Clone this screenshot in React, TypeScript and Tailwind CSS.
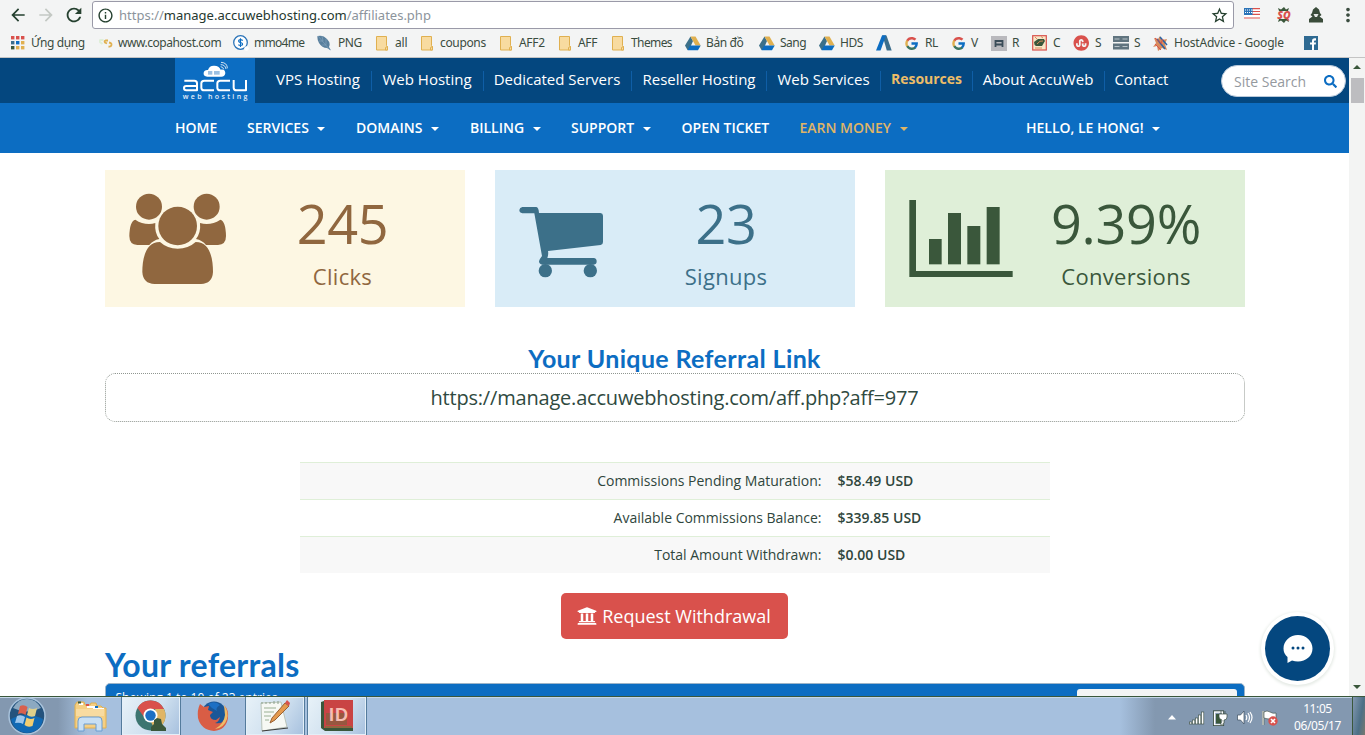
import React from "react";
import { MdArrowBack, MdArrowForward, MdRefresh, MdStarBorder, MdMoreVert, MdInfoOutline } from "react-icons/md";
import { FaSearch, FaUniversity, FaStumbleuponCircle } from "react-icons/fa";

const Apps = () => (
  <svg width="14" height="14" viewBox="0 0 14 14">
    {["#d9514c", "#d9514c", "#d9514c", "#3c6e8c", "#0c6dc2", "#e0b050", "#3a573b", "#e0b050", "#e0b050"].map((c, i) => (
      <rect key={i} x={(i % 3) * 5} y={Math.floor(i / 3) * 5} width="3.4" height="3.4" fill={c} />
    ))}
  </svg>
);

const Copa = () => (
  <svg width="14" height="14" viewBox="0 0 14 14" fill="none">
    <path d="M4.500 4H2Q0 4 1 6L3.500 8" stroke="#dfefd8" strokeWidth="2" />
    <path d="M9 4.500H6.500Q5 5 6 6.500L8 7.500M10 6.500Q12.800 7 12.500 9Q12 11 9.500 10.500" stroke="#e0b050" strokeWidth="1.800" />
  </svg>
);

const Coin = () => (
  <svg width="16" height="16" viewBox="0 0 16 16">
    <circle cx="7.500" cy="7.500" r="6.800" fill="#fff" stroke="#2b74b8" strokeWidth="1.300" />
    <path d="M9.800 5.500Q7.500 4 5.800 5.200Q5 7 7.500 7.500Q10 8 9.500 9.800Q7.500 11.200 5.300 9.800M7.500 3.200V12" fill="none" stroke="#0c6dc2" strokeWidth="1.100" />
    <circle cx="13.500" cy="13.500" r="2.300" fill="#fff" />
  </svg>
);

const Feather = () => (
  <svg width="15" height="16" viewBox="0 0 15 16">
    <path d="M.5 1Q6-.5 10 4Q14 8 12 12L14 15.500L10 13Q5 13 2 8Q0 5 .5 1Z" fill="#587f9d" />
    <path d="M1 1L13 15M5 1L6 6M9 4L9 10M2 6L6 6M5 10L9 10" stroke="#7fa0ba" strokeWidth=".7" />
  </svg>
);

const Folder = () => (
  <svg width="13" height="15" viewBox="0 0 13 15">
    <path d="M.5.5H10.500V9.500L11.500 11V14H.5Z" fill="#f8dba0" stroke="#e0b050" />
    <path d="M11.500 10.500V14H9.500V11.500Z" fill="#f8dba0" stroke="#e0b050" />
  </svg>
);

const Drive = () => (
  <svg width="16" height="15" viewBox="0 0 16 15">
    <path d="M5.500 0.500L8 5L4 14H2.500L0 9.500Z" fill="#3c7089" />
    <path d="M5.500.500H10.500L15.700 9.500H10.500Z" fill="#e0b050" />
    <path d="M5 9.500H15.700L13 14.300H2.600Z" fill="#0c6dc2" />
  </svg>
);

const Adwords = () => (
  <svg width="16" height="16" viewBox="0 0 16 16">
    <path d="M6 .5H10L4.500 15.500H0Z" fill="#0c6dc2" />
    <path d="M6.500 .5H10.500L15.700 15.500H10.800Z" fill="#3c6e8c" />
    <path d="M6 .5H10L8 6Z" fill="#0c6dc2" />
  </svg>
);

const Google = () => (
  <svg width="13" height="13" viewBox="0 0 13 13" fill="none" strokeWidth="2.400">
    <path d="M2 4Q4 .7 7.500 1.300Q9.500 1.700 10.500 2.700" stroke="#d9514c" />
    <path d="M2.300 3.500Q.6 6.500 2.300 9.500" stroke="#e0b050" />
    <path d="M2.300 9.200Q4 12 7 11.700Q9 11.600 10.500 10.300" stroke="#3c7560" />
    <path d="M6.500 6.500H11.700Q11.700 9 10 10.500" stroke="#0c6dc2" />
  </svg>
);

const GrayR = () => (
  <svg width="16" height="15" viewBox="0 0 16 15">
    <rect width="16" height="15" fill="#b9b9bd" />
    <path d="M4.500 11V5H11.500V11M4 8.500H12" fill="none" stroke="#3a4c58" strokeWidth="1.800" />
  </svg>
);

const RedC = () => (
  <svg width="15" height="16" viewBox="0 0 15 16">
    <rect x=".7" y=".7" width="13.600" height="14.300" fill="#f8e6c8" stroke="#d9514c" strokeWidth="1.200" />
    <path d="M2 7L6 4H12L13 6L10 11H4Q2 10 2 7Z" fill="#3a573b" />
    <path d="M5 9Q8 5 11 6M3 2L5 4M9 1.500L11 3M3 13H10" stroke="#d98b5c" fill="none" />
  </svg>
);

const Server = () => (
  <svg width="16" height="14" viewBox="0 0 16 14">
    <rect width="16" height="6" fill="#60747f" />
    <rect y="7.500" width="16" height="6" fill="#60747f" />
    <path d="M1.500 3H6.500M9.500 3H14.500M1.500 10.500H6.500M9.500 10.500H14.500" stroke="#b9c3c9" strokeWidth="1.200" />
  </svg>
);

const Host = () => (
  <svg width="15" height="15" viewBox="0 0 15 15">
    <path d="M1 2L5 3L7 0L9 4L14 3L12 8L14 14L9 12L5 15L4 10L0 11L3 7Z" fill="#d98b5c" />
    <path d="M7 1L14 9M4 3L12 13" stroke="#2b64a5" strokeWidth="1.500" />
    <path d="M2 2L9 8M10 3L8 7M2 8L8 14" stroke="#d9514c" />
  </svg>
);

const Facebook = () => (
  <svg width="14" height="14" viewBox="0 0 14 14">
    <rect width="14" height="14" fill="#2f6a92" />
    <path d="M8 14V8.500H6V6.500H8V5Q8 2.300 10.800 2.300H12V4.400H11Q10 4.400 10 5.400V6.500H12L11.700 8.500H10V14Z" fill="#fff" />
  </svg>
);

const bookmarks: [React.ReactNode, string, string, string, string][] = [
  [<Apps />, "w-[88px]", "w-[20px]", "Ứng dụng", "tracking-[-0.4px]"],
  [<Copa />, "w-[134px]", "w-[19px]", "www.copahost.com", "tracking-[-0.45px]"],
  [<Coin />, "w-[84px]", "w-[21px]", "mmo4me", "tracking-[-0.7px]"],
  [<Feather />, "w-[59px]", "w-[21px]", "PNG", "tracking-[-0.4px]"],
  [<Folder />, "w-[45px]", "w-[19px]", "all", "tracking-[-0.2px]"],
  [<Folder />, "w-[79px]", "w-[19px]", "coupons", "tracking-[-0.35px]"],
  [<Folder />, "w-[59px]", "w-[19px]", "AFF2", "tracking-[-0.3px]"],
  [<Folder />, "w-[53px]", "w-[19px]", "AFF", "tracking-[-0.3px]"],
  [<Folder />, "w-[73px]", "w-[19px]", "Themes", "tracking-[-0.6px]"],
  [<Drive />, "w-[74px]", "w-[21px]", "Bản đồ", "tracking-[-0.4px]"],
  [<Drive />, "w-[60px]", "w-[21px]", "Sang", "tracking-[-0.5px]"],
  [<Drive />, "w-[57px]", "w-[21px]", "HDS", "tracking-[-0.5px]"],
  [<Adwords />, "w-[29px]", "w-[20px]", "", ""],
  [<Google />, "w-[47px]", "w-[20px]", "RL", "tracking-[-0.4px]"],
  [<Google />, "w-[39px]", "w-[19px]", "V", ""],
  [<GrayR />, "w-[41px]", "w-[21px]", "R", ""],
  [<RedC />, "w-[41px]", "w-[21px]", "C", ""],
  [<FaStumbleuponCircle size={16} color="#d9514c" />, "w-[40px]", "w-[22px]", "S", ""],
  [<Server />, "w-[40px]", "w-[21px]", "S", ""],
  [<Host />, "w-[151px]", "w-[21px]", "HostAdvice - Google", "tracking-[-0.2px]"],
  [<Facebook />, "w-[20px]", "w-[20px]", "", ""],
];

function Browser() {
  return (
    <div className="h-[58px] shrink-0 border-b border-[#c4c4c4] bg-[#f3f4f4] font-['Noto_Sans',sans-serif] text-[#3a4c3f]">
      <div className="flex h-[30px] items-center">
        <MdArrowBack size={20} className="ml-2 shrink-0 text-[#25402f]" />
        <MdArrowForward size={20} className="ml-2 shrink-0 text-[#c3c8c3]" />
        <MdRefresh size={22} className="ml-[7px] shrink-0 text-[#25402f]" />
        <div className="ml-[7px] flex h-7 w-[1142px] items-center rounded-[3px] border border-[#9a9aa8] bg-white">
          <MdInfoOutline size={17} className="ml-[4px] shrink-0 text-[#25402f]" />
          <span className="ml-[5px] text-[13px] leading-none whitespace-nowrap text-[#8c949c]">
            https://<span className="text-[#25382f]">manage.accuwebhosting.com</span>/affiliates.php
          </span>
          <MdStarBorder size={19} className="mr-[4px] ml-auto shrink-0 text-[#25402f]" />
        </div>
        <svg className="mb-1 ml-[10px] shrink-0" width="16" height="11" viewBox="0 0 16 11">
          <rect width="16" height="11" fill="#fff" />
          <path d="M0 .7H16M0 3.500H16M0 6.300H16M0 10H16" stroke="#d9514c" strokeWidth="1.200" />
          <rect width="8.500" height="7" fill="#2b74b8" />
          <path d="M1 2H8M1 4.500H8" stroke="#fff" strokeDasharray="1 1" />
        </svg>
        <svg className="ml-[16px] shrink-0" width="16" height="16" viewBox="0 0 16 16">
          <path d="M3 4L2 1L5 2.500L8 0L10 2.500L13 1L12 4ZM3 12L2 15L5 13.500L8 16L10 13.500L13 15L12 12Z" fill="#3a573b" />
          <text x="8" y="12" textAnchor="middle" fontFamily="Open Sans" fontStyle="italic" fontWeight="800" fontSize="10.500" fill="#d9514c">SQ</text>
        </svg>
        <svg className="ml-[17px] shrink-0" width="14" height="16" viewBox="0 0 14 16">
          <path d="M4 2.500L7 0L10 2.500L11 6L12.500 8L10.500 9.500L14 12V15.500H0V12L3.500 9.500L1.500 8L3 6Z" fill="#3a4c3a" />
          <path d="M4.500 7H9.500L8 10H6Z" fill="#e5e8e5" />
        </svg>
        <MdMoreVert size={22} className="ml-[14px] shrink-0 text-[#3a4c3f]" />
      </div>
      <div className="flex h-[26px] items-center pl-[11px]">
        {bookmarks.map(([icon, w, iw, label, tracking], i) => (
          <div key={i} className={`flex shrink-0 items-center ${w}`}>
            <span className={`flex shrink-0 ${iw}`}>{icon}</span>
            <span className={`text-[12px] leading-4 whitespace-nowrap ${tracking}`}>{label}</span>
          </div>
        ))}
      </div>
    </div>
  );
}

function Logo() {
  return (
    <svg width="80" height="45" viewBox="0 0 240 135" className="bg-[#0c6dc2]">
      <path d="M97 56Q84 54 86 44Q88 35 99 36Q103 22 118 23Q132 23 137 35Q150 33 151 45Q150 56 139 56Z" fill="#fff" />
      <rect x="99" y="39" width="13" height="11" fill="#9cc0e2" />
      <rect x="117" y="39" width="17" height="11" fill="#9cc0e2" />
      <path d="M137 26Q145 27 146 34M137 20Q151 20 153 33M138 13Q157 14 157 31" fill="none" stroke="#d4e4f2" strokeWidth="3" />
      <g fill="none" stroke="#fff" strokeWidth="6" strokeLinejoin="round">
        <path d="M28 68H58Q66 68 66 76V97H34Q27 97 27 90Q27 84 34 84H66" />
        <path d="M117 68H88Q79 68 79 76V89Q79 97 88 97H117" />
        <path d="M165 68H136Q127 68 127 76V89Q127 97 136 97H165" />
        <path d="M176 66V89Q176 97 185 97H213V66" />
      </g>
      <text x="23" y="122" textLength="194" fontFamily="Open Sans" fontSize="21" fontWeight="600" fill="#e4eef8">web hosting</text>
    </svg>
  );
}

const topLinks: [string, string, string][] = [
  ["VPS Hosting", "w-[106px]", ""],
  ["Web Hosting", "w-[112px]", ""],
  ["Dedicated Servers", "w-[148px]", ""],
  ["Reseller Hosting", "w-[135px]", "pl-px"],
  ["Web Services", "w-[114px]", "pl-px"],
  ["Resources", "w-[92px]", "font-bold text-[14px] text-[#edbd68] pb-0.5 pl-px"],
  ["About AccuWeb", "w-[132px]", ""],
  ["Contact", "w-[75px] border-transparent", ""],
];

const menu: [string, string, boolean][] = [
  ["HOME", "w-[72px]", false],
  ["SERVICES", "w-[109px]", true],
  ["DOMAINS", "w-[114px]", true],
  ["BILLING", "w-[101px]", true],
  ["SUPPORT", "w-[110.5px]", true],
  ["OPEN TICKET", "w-[118px]", false],
  ["EARN MONEY", "w-[226.5px] text-[#e0b566]", true],
  ["HELLO, LE HONG!", "w-[160px]", true],
];

const UsersIcon = () => (
  <svg width="98" height="92" viewBox="87 279 294 276" fill="#90673f">
    <circle cx="147" cy="320" r="39" />
    <circle cx="320" cy="320" r="39" />
    <circle cx="233" cy="378" r="58" />
    <path d="M106 359Q125 372 147 372Q157 372 166 369Q163 398 178 417Q159 421 148 435H112Q88 434 88 408Q89 363 106 359Z" />
    <path d="M361 359Q341 372 320 372Q310 372 300 369Q303 398 288 417Q307 421 318 435H354Q378 434 378 408Q377 363 361 359Z" />
    <path d="M180 426Q202 446 233 446Q265 446 287 426C330 426 339 475 339 516Q337 551 303 552H164Q129 551 127 516C127 475 137 426 180 426Z" />
  </svg>
);

const CartIcon = () => (
  <svg width="85" height="72" viewBox="117 138 255 216" fill="#3c7089">
    <path d="M127 141H169Q176 142 177 159H361Q369 160 369 167V246Q369 254 362 255L204 273Q206 282 202 294H341Q350 295 350 304Q350 314 341 314H187Q177 313 177 304Q178 298 186 288L163 160H127Q118 158 118 150Q119 142 127 141Z" />
    <circle cx="196" cy="332" r="20" />
    <circle cx="331" cy="332" r="20" />
  </svg>
);

const ChartIcon = () => (
  <svg width="104" height="79" viewBox="117 297 312 237" fill="#3a573b">
    <path d="M118 300H138V513H428V531H118Z" />
    <rect x="177" y="417" width="38" height="76" />
    <rect x="234" y="339" width="39" height="154" />
    <rect x="292" y="378" width="39" height="115" />
    <rect x="350" y="321" width="39" height="172" />
  </svg>
);

function Stat({ icon, value, label, box, iconPos, tone }: { icon: React.ReactNode; value: string; label: string; box: string; iconPos: string; tone: string }) {
  return (
    <div className={`flex h-[137px] w-[360px] ${box}`}>
      <div className={`w-[115px] shrink-0 ${iconPos}`}>{icon}</div>
      <div className={`flex w-[245px] flex-col items-center ${tone}`}>
        <span className="mt-[14px] h-[77px] text-[54px] leading-[78px] font-normal tracking-[-0.3px]">{value}</span>
        <span className="h-[30px] text-[22px] leading-[30px] tracking-[0.3px]">{label}</span>
      </div>
    </div>
  );
}

function Page() {
  return (
    <div className="relative flex h-full w-[1349px] shrink-0 flex-col overflow-hidden bg-white font-['Open_Sans',sans-serif]">
      <div className="flex h-[45px] shrink-0 bg-[#04477f] pl-[175px]">
        <Logo />
        <div className="flex pt-[13px] pl-[11px]">
          {topLinks.map(([t, w, x]) => (
            <div key={t} className={`flex h-5 shrink-0 items-center justify-center border-r border-[#0f5ea6] pr-px pb-1 text-[15px] whitespace-nowrap text-white ${w}`}>
              <span className={x}>{t}</span>
            </div>
          ))}
        </div>
        <div className="mt-[7px] ml-[41px] flex h-8 w-[125px] items-center rounded-full border border-[#b9c9da] bg-white pt-px pr-2 pl-3">
          <span className="text-[14px] whitespace-nowrap text-[#94999e]">Site Search</span>
          <FaSearch size={13} className="ml-auto text-[#0c6dc2]" />
        </div>
      </div>
      <div className="flex h-[50px] shrink-0 items-center bg-[#0c6dc2] pb-0.5 pl-[175px] text-[14px] font-semibold text-white">
        {menu.map(([t, w, caret]) => (
          <div key={t} className={`flex shrink-0 items-center whitespace-nowrap ${w}`}>
            {t}
            {caret && <span className="mt-1 ml-[8.5px] border-x-4 border-t-4 border-x-transparent border-t-current" />}
          </div>
        ))}
      </div>
      <div className="mt-[17px] flex shrink-0 gap-[30px] pl-[105px]">
        <Stat icon={<UsersIcon />} value="245" label="Clicks" box="bg-[#fdf7e3]" iconPos="pt-[23px] pl-6" tone="text-[#90673f]" />
        <Stat icon={<CartIcon />} value="23" label="Signups" box="bg-[#d9ecf7]" iconPos="pt-9 pl-6" tone="pr-[13px] text-[#3c7089]" />
        <Stat icon={<ChartIcon />} value="9.39%" label="Conversions" box="bg-[#dfefd8]" iconPos="pt-[29px] pl-6" tone="pl-[7px] text-[#3a573b]" />
      </div>
      <h2 className="mt-[36px] h-[30px] w-[1349px] shrink-0 text-center font-['Lato',sans-serif] text-[25px] leading-[31px] font-bold tracking-[0.36px] whitespace-nowrap text-[#0c6dc2]">Your Unique Referral Link</h2>
      <div className="mx-auto flex h-[49px] w-[1140px] shrink-0 items-center justify-center rounded-[10px] border border-dotted border-[#8f9690] text-[20px] tracking-[-0.19px] text-[#2f4a3f]">
        https://manage.accuwebhosting.com/aff.php?aff=977
      </div>
      <div className="mx-auto mt-10 w-[750px] shrink-0 text-[14px] text-[#2f463c]">
        {[
          ["Commissions Pending Maturation:", "$58.49 USD"],
          ["Available Commissions Balance:", "$339.85 USD"],
          ["Total Amount Withdrawn:", "$0.00 USD"],
        ].map(([a, b], i) => (
          <div key={a} className={`flex h-[37px] items-center border-t border-[#dfefd8] pb-0.5 ${i === 1 ? "bg-white" : "bg-[#f8f8f8]"}`}>
            <span className="w-[522px] text-right">{a}</span>
            <span className="pl-4 font-semibold">{b}</span>
          </div>
        ))}
      </div>
      <button className="mx-auto mt-5 flex h-[46px] w-[227px] shrink-0 items-center justify-center gap-[5px] rounded-[5px] bg-[#d9514c] pr-px text-[18px] whitespace-nowrap text-white">
        <FaUniversity size={20} />
        Request Withdrawal
      </button>
      <h1 className="mt-[6px] h-[38px] shrink-0 pl-[105px] font-['Lato',sans-serif] text-[32px] leading-[40px] font-bold tracking-[0.25px] text-[#0c6dc2]">Your referrals</h1>
      <div className="mx-auto flex h-[60px] w-[1140px] shrink-0 justify-between rounded-t-[5px] border border-[#9db4c8] bg-[#0c6dc2] pr-[7px] pl-[10px] text-[12px] text-white">
        <span className="pt-[5px]">Showing 1 to 10 of 23 entries</span>
        <span className="mt-[5px] h-[30px] w-[160px] rounded-[3px] bg-[#f3f4f4]" />
      </div>
      <div className="absolute top-[558px] left-[1265px] flex size-[65px] items-center justify-center rounded-full bg-[#04477f] shadow-[0_0_0_4px_white,0_1px_3px_5px_#e6ebe6]">
        <svg width="30" height="30" viewBox="0 0 30 30">
          <path d="M15 1C23 1 29.500 7 29.500 14.500S23 27.500 15 27.500Q12 27.500 9 26.500L4.500 29V23Q.5 20 .5 14.500C.5 7 7 1 15 1Z" fill="#fff" />
          <circle cx="10" cy="14" r="1.500" fill="#04477f" />
          <circle cx="15" cy="14" r="1.500" fill="#04477f" />
          <circle cx="20" cy="14" r="1.500" fill="#04477f" />
        </svg>
      </div>
    </div>
  );
}

const Start = () => (
  <svg width="38" height="38" viewBox="0 0 38 38">
    <circle cx="19" cy="19" r="18" fill="#24527c" stroke="#a9c3dc" strokeWidth="1.500" />
    <path d="M3 22Q19 14 35 22Q33 35 19 36Q6 35 3 22Z" fill="#1169b4" />
    <path d="M5 11Q10 2 19 2T33 11Q19 18 5 11Z" fill="#b9cede" opacity=".7" />
    <path d="M12 9Q16 7 19.500 10L17.500 18Q14 15 10 17Z" fill="#d9604c" />
    <path d="M21 11Q25 13 29 11L27 19Q23 21 19 18Z" fill="#dfcf8a" />
    <path d="M9 19Q13 17 17 20L15 27Q12 25 7 26Z" fill="#9cc6ec" />
    <path d="M18.500 20.500Q22 23 26.500 21L24.500 29Q20 31 16.500 28Z" fill="#f3cd70" />
  </svg>
);

const Explorer = () => (
  <svg width="34" height="32" viewBox="0 0 34 32">
    <path d="M2 5L4 2H11L12 5H17L18 3H23L24 6H28L30 8H33V28H2Z" fill="#f5cf83" stroke="#e0b050" />
    <path d="M6 3H10V5H6ZM14 6H24V8H14ZM20 8H31V9H20Z" fill="#fff" />
    <path d="M5 2.500H8" stroke="#3a573b" strokeWidth="2" />
    <path d="M13 5H16" stroke="#d9514c" strokeWidth="2" />
    <path d="M22 7H25" stroke="#0c6dc2" strokeWidth="2" />
    <path d="M3 9H31V16H3Z" fill="#f8dba0" />
    <path d="M5 31V21Q5 17 9 17H26Q29 17 29 21V31H23V24H11V31Z" fill="#c8dff3" stroke="#6a9cd0" />
  </svg>
);

const Chrome = () => (
  <svg width="32" height="32" viewBox="0 0 32 32">
    <circle cx="15.500" cy="15.500" r="15" fill="#3c7570" />
    <path d="M2.500 8A15 15 0 0 1 29 9H15.500L9 17Z" fill="#d9514c" />
    <path d="M29 9A15 15 0 0 1 20 30L16 22L22 16L20 9Z" fill="#e0b566" />
    <circle cx="15.500" cy="15.500" r="7" fill="#fff" />
    <circle cx="15.500" cy="15.500" r="5.200" fill="#1c6fc4" />
    <path d="M16 31V27L19 24V20L22 18L26 19L27 24L31 28V31Z" fill="#3a573b" />
  </svg>
);

const Firefox = () => (
  <svg width="32" height="32" viewBox="0 0 32 32">
    <circle cx="17" cy="14" r="12.500" fill="#1a5798" />
    <path d="M3 4L7 7L12 6L11 10L16 12L13 15Q13 20 19 20L23 17Q22 22 18 23Q26 25 29 16Q30 9 27 5Q32 10 31 18Q29 30 17 31Q4 30 1 18Q0 10 3 4Z" fill="#d95d45" />
    <path d="M27 5Q32 12 30 19Q27 28 18 29Q27 24 28 15Z" fill="#edbd68" />
    <path d="M11 4Q18 0 23 5Q18 8 20 11Q15 9 11 4Z" fill="#1c6fc4" />
  </svg>
);

const Notepad = () => (
  <svg width="32" height="32" viewBox="0 0 32 32">
    <path d="M2 3L22 2L28 27L3 31Z" fill="#f6f8f4" stroke="#b9c3b9" />
    <path d="M3 2V4M7 2V4M11 2V4M15 1V4M19 1V4" stroke="#8aa08a" />
    <path d="M5 8H17M5 12H15M5 16H12M6 20H10" stroke="#b9c8b4" strokeWidth="1.500" />
    <path d="M3 31L29 28" stroke="#3a3a3a" />
    <path d="M13 18L26 3L30 6L16 20L11 23Z" fill="#e49a4f" stroke="#9a6134" />
    <path d="M26 3L28 0L31 3L30 6Z" fill="#d9514c" />
  </svg>
);

const InDesign = () => (
  <svg width="33" height="32" viewBox="0 0 33 32">
    <path d="M3 1H32V31H4L0 28V2Z" fill="#3a573b" />
    <path d="M3 0H32V28H3Z" fill="#c94444" />
    <path d="M5 13H26V25H5Z" fill="#97573f" />
    <path d="M4 27H31" stroke="#90673f" strokeWidth="2" />
    <text x="18" y="21" textAnchor="middle" fontFamily="Liberation Sans" fontWeight="bold" fontSize="18" fill="#f6bdb3" letterSpacing="1">ID</text>
  </svg>
);

const activeTask =
  "border-x border-[#547b9c] bg-[linear-gradient(120deg,#e8f2f8,#cfe0ef_55%,#a6c0de)] shadow-[inset_0_0_0_1px_#e4eff8]";

function Taskbar() {
  return (
    <div className="flex h-[39px] shrink-0 items-stretch border-t border-[#3a573b] bg-[linear-gradient(90deg,#8398b0_0,#8398b0_58px,#a6c0de_88px,#a6c0de_1120px,#8398b0_1155px)] text-white shadow-[inset_0_1px_0_#c5d7e8]">
      <div className="flex w-[59px] items-center pl-2"><Start /></div>
      <div className="flex w-[62px] items-center justify-center"><Explorer /></div>
      <div className={`flex w-[60px] items-center justify-center ${activeTask}`}><Chrome /></div>
      <div className="flex w-[64px] items-center justify-center"><Firefox /></div>
      <div className={`flex w-[60px] items-center justify-center ${activeTask}`}><Notepad /></div>
      <div className={`ml-[2px] flex w-[60px] items-center justify-center ${activeTask}`}><InDesign /></div>
      <div className="mt-[3px] ml-auto flex items-center">
        <svg width="8" height="5" viewBox="0 0 8 5"><path d="M0 4.500L4 0L8 4.500Z" fill="#fff" /></svg>
        <svg className="ml-[13px]" width="16" height="14" viewBox="0 0 16 14">
          {[2, 4, 6, 9, 12].map((h, i) => (
            <rect key={i} x={i * 3 + 0.5} y={13 - h} width="2.300" height={h} fill="#fff" stroke="#3a4c3f" strokeWidth=".6" />
          ))}
        </svg>
        <svg className="ml-[8px]" width="15" height="16" viewBox="0 0 15 16" fill="none">
          <rect x="1.500" y="2" width="8" height="13" stroke="#fff" strokeWidth="1.600" />
          <rect x=".4" y=".8" width="10.300" height="14.800" stroke="#3a4c3f" strokeWidth=".8" />
          <rect x="3" y="4" width="5" height="9.500" fill="#3a573b" />
          <path d="M6 4H14V7Q14 10 11 10V13Q10 15 7 14Q9 13 9 10Q6 9 6 7ZM8 1V4M12 1V4" fill="#fff" stroke="#3a4c3f" strokeWidth=".7" />
        </svg>
        <svg className="ml-[9px]" width="16" height="15" viewBox="0 0 16 15" fill="none">
          <path d="M.5 5H3.500L7 1V14L3.500 10H.5Z" fill="#fff" stroke="#3a4c5c" strokeWidth=".7" />
          <path d="M9 5Q10.500 7.500 9 10M11 3Q14 7.500 11 12M13 2Q17 7.500 13 13" stroke="#fff" strokeWidth="1.200" />
        </svg>
        <svg className="ml-[9px]" width="16" height="16" viewBox="0 0 16 16">
          <path d="M1 1V15" stroke="#3a4c3f" strokeWidth="2.500" />
          <path d="M1 1V15" stroke="#fff" strokeWidth="1.200" />
          <path d="M2 2Q5 0 8 2T14 3V10Q11 9 8 9T2 8Z" fill="#fff" stroke="#3a4c3f" strokeWidth=".6" />
          <circle cx="11" cy="11" r="4.700" fill="#d9514c" />
          <path d="M9 9L13 13M13 9L9 13" stroke="#fff" strokeWidth="1.600" />
        </svg>
      </div>
      <div className="ml-[15px] flex w-[49px] flex-col items-center pt-[3px] font-['Noto_Sans',sans-serif] text-[12px] leading-[17px] tracking-[-0.4px]">
        <span>11:05</span>
        <span>06/05/17</span>
      </div>
      <div className="ml-[10px] w-[13px] border-l border-[#3a573b] bg-[linear-gradient(100deg,#8398b0,#4c6f86_60%,#78796e)]" />
    </div>
  );
}

export default function App() {
  return (
    <div className="flex h-[735px] w-[1365px] flex-col overflow-hidden">
      <Browser />
      <div className="flex h-[638px] shrink-0">
        <Page />
        <div className="flex w-4 flex-col items-center bg-[#f3f4f3]">
          <span className="mt-[7px] border-x-4 border-b-4 border-x-transparent border-b-[#3a573b]" />
          <span className="mt-[9px] h-[25px] w-[13px] bg-[#bdbdc0]" />
          <span className="mt-auto mb-[7px] border-x-4 border-t-4 border-x-transparent border-t-[#3a573b]" />
        </div>
      </div>
      <Taskbar />
    </div>
  );
}
